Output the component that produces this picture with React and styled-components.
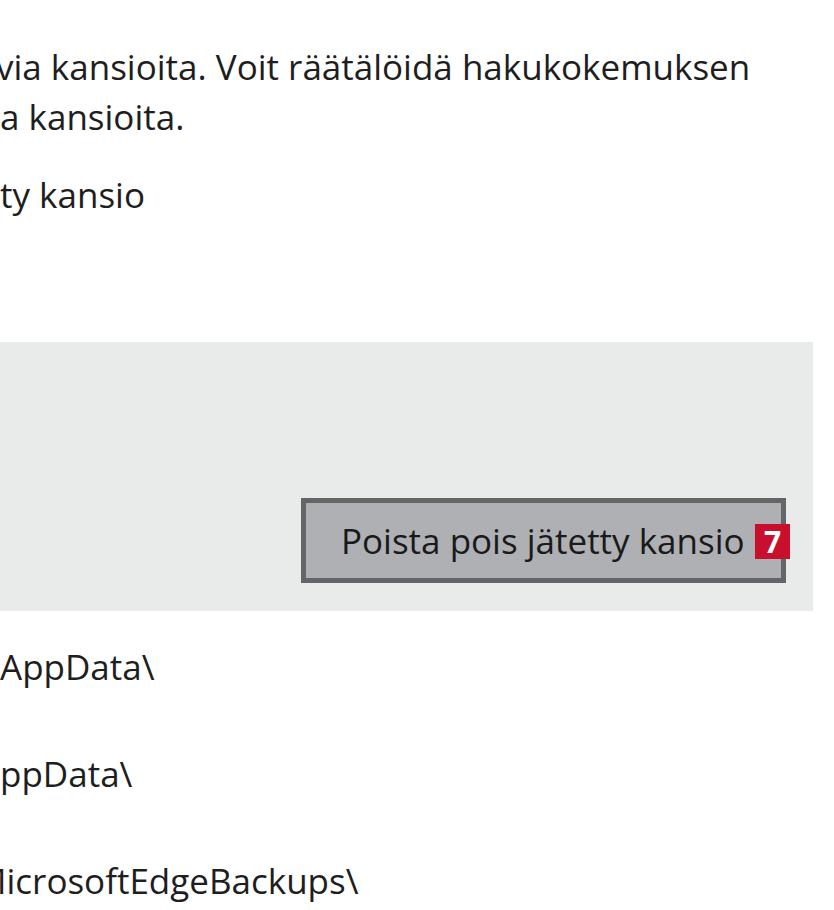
import React from "react";
import styled, { createGlobalStyle } from "styled-components";

const Global = createGlobalStyle`
  html, body {
    margin: 0;
    padding: 0;
    background: #ffffff;
  }
  body {
    font-family: "Segoe UI", "Open Sans", "Noto Sans", sans-serif;
    color: #1e1e1e;
  }
`;

const Page = styled.div`
  width: 834px;
  height: 910px;
  overflow: hidden;
  background: #ffffff;
`;

const Intro = styled.div`
  padding-top: 42px;
  display: flex;
  flex-direction: column;
`;

const Line = styled.div`
  font-size: 35px;
  line-height: 50px;
  white-space: nowrap;
  margin-left: ${(p) => p.$shift || 0}px;
  margin-top: ${(p) => p.$gap || 0}px;
`;

const Panel = styled.section`
  margin-top: 122px;
  width: 813px;
  height: 269px;
  box-sizing: border-box;
  background: #e9eaea;
  display: flex;
  justify-content: flex-end;
  align-items: flex-end;
  padding: 0 27px 28px 0;
`;

const ActionButton = styled.button`
  position: relative;
  width: 485px;
  height: 85px;
  flex-shrink: 0;
  box-sizing: border-box;
  border: 5px solid #646566;
  background: #aeb0b3;
  color: #1a1a1a;
  font-family: inherit;
  font-size: 35px;
  line-height: 73px;
  text-align: left;
  padding: 0 0 0 35px;
  white-space: nowrap;
  cursor: pointer;
`;

const Badge = styled.span`
  position: absolute;
  right: -9px;
  top: 21px;
  width: 35px;
  height: 35px;
  background: #c8102e;
  color: #ffffff;
  font-family: "Open Sans", "Liberation Sans", sans-serif;
  font-weight: 700;
  font-size: 30px;
  line-height: 35px;
  text-align: center;
`;

const FolderList = styled.ul`
  list-style: none;
  margin: 2px 0 0;
  padding: 0;
`;

const Folder = styled.li`
  font-size: 35px;
  line-height: 107px;
  white-space: nowrap;
  margin-left: ${(p) => p.$shift || 0}px;
`;

export default function App() {
  return (
    <Page>
      <Global />
      <Intro>
        <Line $shift={-4}>via kansioita. Voit räätälöidä hakukokemuksen</Line>
        <Line>a kansioita.</Line>
        <Line $gap={28}>ty kansio</Line>
      </Intro>
      <Panel>
        <ActionButton>
          Poista pois jätetty kansio
          <Badge>7</Badge>
        </ActionButton>
      </Panel>
      <FolderList>
        <Folder>AppData\</Folder>
        <Folder>ppData\</Folder>
        <Folder $shift={-25}>MicrosoftEdgeBackups\</Folder>
      </FolderList>
    </Page>
  );
}
